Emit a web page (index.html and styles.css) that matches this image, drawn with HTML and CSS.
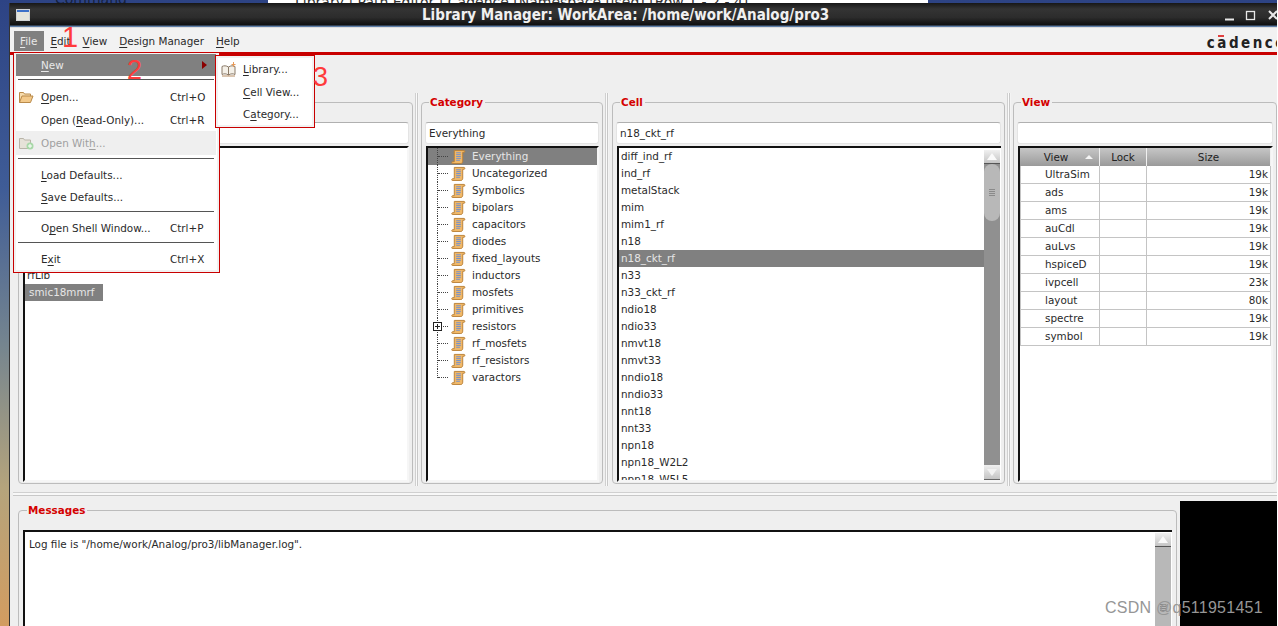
FILE: index.html
```html
<!DOCTYPE html>
<html lang="en">
<head>
<meta charset="utf-8">
<title>Library Manager</title>
<link rel="stylesheet" href="styles.css">
</head>
<body>
<svg class="defs" width="0" height="0" aria-hidden="true">
  <symbol id="scroll" viewBox="0 0 16 16">
    <path d="M3.500 1.500h10.500c1 0 1 2 0 2h-1.500v9.500c0 1.500-1 2.500-2 2.500H1.500c-1 0-1-2 .5-2h1.500z" fill="#f0b868" stroke="#b97f35"/>
    <path d="M5.500 4h5M5.500 6h5M5.500 8h5M5.500 10h5M5.500 12h4" stroke="#6f8fd0" stroke-width="1"/>
  </symbol>
</svg>
<div class="desktop">
  <div class="bg-text">Command</div>
  <div class="bg-window">Library | Path Editor | Cadence [Namespace used] [Row 1 - 2 - 4]</div>

  <div class="window">
    <header class="titlebar">
      <span class="win-icon"></span>
      <span class="title">Library Manager: WorkArea: /home/work/Analog/pro3</span>
      <span class="win-buttons">
        <svg width="52" height="14" viewBox="0 0 52 14">
          <path d="M0 11.500h9" stroke="#e8e8e8" stroke-width="2"/>
          <rect x="21.500" y="3.500" width="8" height="8" fill="none" stroke="#e8e8e8" stroke-width="1.300"/>
          <path d="M44 3l8 8M52 3l-8 8" stroke="#e8e8e8" stroke-width="2"/>
        </svg>
      </span>
    </header>

    <nav class="menubar">
      <span class="menu-top active"><u>F</u>ile</span>
      <span class="menu-top"><u>E</u>dit</span>
      <span class="menu-top"><u>V</u>iew</span>
      <span class="menu-top"><u>D</u>esign Manager</span>
      <span class="menu-top"><u>H</u>elp</span>
      <span class="logo">c<span class="logo-a">a</span>dence</span>
    </nav>
    <div class="redline"></div>
    <div class="toolbar"></div>

    <div class="panes">
      <fieldset class="group">
        <legend>Library</legend>
        <div class="field"></div>
        <div class="list list-lib">
          <div class="rows rows-lib">
            <div class="row">rfLib</div>
            <div class="row row-fit selected">smic18mmrf</div>
          </div>
        </div>
      </fieldset>
      <div class="vsplit"></div>

      <fieldset class="group">
        <legend>Category</legend>
        <div class="field">Everything</div>
        <div class="list">
          <div class="rows tree">
            <div class="node selected"><i class="branch"></i><svg class="scroll"><use href="#scroll"/></svg>Everything</div>
            <div class="node"><i class="branch"></i><svg class="scroll"><use href="#scroll"/></svg>Uncategorized</div>
            <div class="node"><i class="branch"></i><svg class="scroll"><use href="#scroll"/></svg>Symbolics</div>
            <div class="node"><i class="branch"></i><svg class="scroll"><use href="#scroll"/></svg>bipolars</div>
            <div class="node"><i class="branch"></i><svg class="scroll"><use href="#scroll"/></svg>capacitors</div>
            <div class="node"><i class="branch"></i><svg class="scroll"><use href="#scroll"/></svg>diodes</div>
            <div class="node"><i class="branch"></i><svg class="scroll"><use href="#scroll"/></svg>fixed_layouts</div>
            <div class="node"><i class="branch"></i><svg class="scroll"><use href="#scroll"/></svg>inductors</div>
            <div class="node"><i class="branch"></i><svg class="scroll"><use href="#scroll"/></svg>mosfets</div>
            <div class="node"><i class="branch"></i><svg class="scroll"><use href="#scroll"/></svg>primitives</div>
            <div class="node"><i class="branch"><b class="plus"></b></i><svg class="scroll"><use href="#scroll"/></svg>resistors</div>
            <div class="node"><i class="branch"></i><svg class="scroll"><use href="#scroll"/></svg>rf_mosfets</div>
            <div class="node"><i class="branch"></i><svg class="scroll"><use href="#scroll"/></svg>rf_resistors</div>
            <div class="node"><i class="branch last"></i><svg class="scroll"><use href="#scroll"/></svg>varactors</div>
          </div>
        </div>
      </fieldset>
      <div class="vsplit"></div>

      <fieldset class="group">
        <legend>Cell</legend>
        <div class="field">n18_ckt_rf</div>
        <div class="list list-scroll">
          <div class="rows">
            <div class="row">diff_ind_rf</div>
            <div class="row">ind_rf</div>
            <div class="row">metalStack</div>
            <div class="row">mim</div>
            <div class="row">mim1_rf</div>
            <div class="row">n18</div>
            <div class="row selected">n18_ckt_rf</div>
            <div class="row">n33</div>
            <div class="row">n33_ckt_rf</div>
            <div class="row">ndio18</div>
            <div class="row">ndio33</div>
            <div class="row">nmvt18</div>
            <div class="row">nmvt33</div>
            <div class="row">nndio18</div>
            <div class="row">nndio33</div>
            <div class="row">nnt18</div>
            <div class="row">nnt33</div>
            <div class="row">npn18</div>
            <div class="row">npn18_W2L2</div>
            <div class="row">npn18_W5L5</div>
          </div>
          <div class="scrollbar">
            <div class="sb-btn"><span class="tri-up"></span></div>
            <div class="sb-thumb"><span class="grip"></span></div>
            <div class="sb-trough"></div>
            <div class="sb-btn sb-btn-down"><span class="tri-down"></span></div>
          </div>
        </div>
      </fieldset>
      <div class="vsplit"></div>

      <fieldset class="group group-view">
        <legend>View</legend>
        <div class="field"></div>
        <div class="list">
          <table class="views">
            <thead>
              <tr><th class="col-view">View<span class="sort"></span></th><th class="col-lock">Lock</th><th>Size</th></tr>
            </thead>
            <tbody>
              <tr><td class="name">UltraSim</td><td></td><td class="size">19k</td></tr>
              <tr><td class="name">ads</td><td></td><td class="size">19k</td></tr>
              <tr><td class="name">ams</td><td></td><td class="size">19k</td></tr>
              <tr><td class="name">auCdl</td><td></td><td class="size">19k</td></tr>
              <tr><td class="name">auLvs</td><td></td><td class="size">19k</td></tr>
              <tr><td class="name">hspiceD</td><td></td><td class="size">19k</td></tr>
              <tr><td class="name">ivpcell</td><td></td><td class="size">23k</td></tr>
              <tr><td class="name">layout</td><td></td><td class="size">80k</td></tr>
              <tr><td class="name">spectre</td><td></td><td class="size">19k</td></tr>
              <tr><td class="name">symbol</td><td></td><td class="size">19k</td></tr>
            </tbody>
          </table>
        </div>
      </fieldset>
    </div>

    <div class="hsplit"><span class="hsplit-bar"></span></div>

    <div class="bottom">
      <fieldset class="group group-msg">
        <legend>Messages</legend>
        <div class="list list-scroll list-msg">
          <div class="log">Log file is "/home/work/Analog/pro3/libManager.log".</div>
          <div class="scrollbar scrollbar-msg">
            <div class="sb-btn"><span class="tri-up"></span></div>
            <div class="sb-thumb sb-thumb-msg"><span class="grip"></span></div>
          </div>
        </div>
      </fieldset>
      <div class="blackbox"></div>
    </div>
  </div>

  <div class="menu menu-file">
    <div class="item item-hot"><span class="ico"></span><span class="label"><u>N</u>ew</span><span class="arrow"></span></div>
    <hr class="sep sep-a">
    <div class="item">
      <span class="ico"><svg width="16" height="14" viewBox="0 0 16 14"><path d="M1.500 12.500V2.500h4l1 1.500h6v2" fill="#f7dcae" stroke="#b98a4a"/><path d="M1.500 12.500l2.500-6.500h11l-2.500 6.500z" fill="#f3c98a" stroke="#b98a4a"/></svg></span>
      <span class="label"><u>O</u>pen...</span><span class="key">Ctrl+O</span>
    </div>
    <div class="item item-low"><span class="ico"></span><span class="label">Open (<u>R</u>ead-Only)...</span><span class="key">Ctrl+R</span></div>
    <div class="item item-off">
      <span class="ico"><svg width="16" height="14" viewBox="0 0 16 14"><path d="M1.500 12.500V2.500h4l1 1.500h6v8.500z" fill="#e6e2d8" stroke="#b8b4a8"/><circle cx="12" cy="10" r="3.500" fill="#a8d8a8"/><path d="M10 10h4M12 8v4" stroke="#fff"/></svg></span>
      <span class="label">Open Wit<u>h</u>...</span>
    </div>
    <hr class="sep">
    <div class="item"><span class="ico"></span><span class="label"><u>L</u>oad Defaults...</span></div>
    <div class="item"><span class="ico"></span><span class="label"><u>S</u>ave Defaults...</span></div>
    <hr class="sep">
    <div class="item"><span class="ico"></span><span class="label">O<u>p</u>en Shell Window...</span><span class="key">Ctrl+P</span></div>
    <hr class="sep">
    <div class="item"><span class="ico"></span><span class="label">E<u>x</u>it</span><span class="key">Ctrl+X</span></div>
  </div>

  <div class="menu menu-new">
    <div class="item">
      <span class="ico ico-sub"><svg width="16" height="15" viewBox="0 0 16 15"><path d="M1 4.500c2-1 4-1 6.500.5v8c-2.500-1.500-4.500-1.500-6.500-.5z" fill="#f4f0e8" stroke="#8a7a68"/><path d="M14 4.500c-2-1-4-1-6.500.5v8c2.500-1.500 4.500-1.500 6.500-.5z" fill="#f4f0e8" stroke="#8a7a68"/><path d="M1 13.500h13v1H1z" fill="#b58a60"/><path d="M12.500 0v5M10.500 2.500h4" stroke="#e89a58"/></svg></span>
      <span class="label"><u>L</u>ibrary...</span>
    </div>
    <div class="item"><span class="ico ico-sub"></span><span class="label"><u>C</u>ell View...</span></div>
    <div class="item"><span class="ico ico-sub"></span><span class="label">C<u>a</u>tegory...</span></div>
  </div>

  <span class="note note-1">1</span>
  <span class="note note-2">2</span>
  <span class="note note-3">3</span>
  <span class="watermark">CSDN @q511951451</span>
</div>
</body>
</html>
```
FILE: styles.css
```css
* { box-sizing: border-box; }
html, body { margin: 0; padding: 0; background: #fff; overflow: hidden; }
body { font: 10.4px/17px "DejaVu Sans", sans-serif; color: #2a2a2a; }
.defs { position: absolute; }

.desktop {
  position: relative;
  width: 1277px;
  height: 626px;
  overflow: hidden;
  background: linear-gradient(180deg, #2d4384 0%, #3f5c97 30%, #75858f 55%, #b5a47c 78%, #d29c60 100%);
}
.bg-text {
  position: absolute; left: 55px; top: -8px;
  font-size: 14px; color: #14203c; line-height: 14px;
}
.bg-window {
  position: absolute; left: 268px; top: 0; width: 660px; height: 3px;
  background: #fff; overflow: hidden;
  padding-left: 27px; font-size: 14px; line-height: 4px; color: #333;
  white-space: nowrap;
}

/* window */
.window {
  position: absolute; left: 9px; top: 3px;
  width: 1268px; height: 623px;
  background: #efefef;
  border-left: 1px solid #333;
  overflow: hidden;
  display: flex; flex-direction: column;
}
.titlebar {
  height: 24px; flex: none;
  display: flex; align-items: center;
  padding-left: 6px;
  background: linear-gradient(180deg, #171717 0%, #343434 25%, #2c2c2c 60%, #0f0f0f 92%, #5f7fa8 96%);
  color: #f0f0f0;
}
.win-icon {
  width: 14px; height: 12px; flex: none;
  background: linear-gradient(180deg, #3c70c8 0 2px, #e4e4dc 2px);
  border: 1px solid #cfd2d4;
}
.title {
  margin-left: 392px;
  font-weight: bold; font-size: 15px; font-stretch: condensed;
  font-family: "DejaVu Sans Condensed", "DejaVu Sans", sans-serif;
  white-space: nowrap;
}
.win-buttons { margin-left: auto; display: flex; }

.menubar {
  height: 25px; flex: none;
  display: flex; align-items: flex-end;
  padding: 0 0 1px 4px;
  background: #f2f2f2;
  border-top: 1px solid #ddd;
  position: relative;
}
.menu-top { height: 20px; line-height: 20px; padding: 0 6px; }
.menu-top.active { background: #808080; color: #e8e8e8; padding-right: 7px; }
u { text-underline-offset: 2px; text-decoration-thickness: 1px; }
.logo {
  position: relative;
  margin: 0 -10px -2px auto;
  font: bold 15px/20px "DejaVu Sans Condensed", "DejaVu Sans", sans-serif;
  font-stretch: condensed;
  letter-spacing: 2.500px;
  color: #222;
  white-space: nowrap;
}
.logo-a { position: relative; }
.logo-a::before {
  content: ""; position: absolute; left: 1px; top: 1px;
  width: 6px; height: 2px; background: #e04040;
}
.redline { height: 3px; flex: none; background: #c80000; }
.toolbar { height: 38px; flex: none; }

/* panes */
.panes {
  height: 394px; flex: none;
  display: grid;
  grid-template-columns: 395px 8px 182px 9px 393px 8px 264px;
  grid-template-rows: minmax(0, 1fr);
  padding-left: 8px;
}
.group {
  margin: 2px 0 3px;
  padding: 13px 3px 1px;
  min-width: 0; min-height: 0;
  border: 1px solid #bcbcbc;
  border-radius: 4px;
  display: flex; flex-direction: column;
}
legend {
  padding: 0 2px 0 1px; margin-left: 4px;
  color: #d40000; font-weight: bold; font-size: 10.4px; line-height: 14px;
}
.field {
  height: 22px; flex: none;
  line-height: 21px; padding-left: 3px;
  background: #fff;
  border: 1px solid #e4e4e4; border-top-color: #b0b0b0;
  border-radius: 3px;
  margin-bottom: 2px;
}
.list {
  flex: 1; min-height: 0;
  margin-left: 1px;
  background: #fff;
  border-top: 2px solid #111; border-left: 2px solid #111;
  border-right: 2px solid #f6f6f6; border-bottom: 2px solid #f6f6f6;
  overflow: hidden;
}
.rows { color: #2a2a2a; }
.rows-lib { padding-top: 119px; }
.row { height: 17px; line-height: 17px; padding-left: 2px; white-space: nowrap; }
.row-fit { width: 78px; padding-left: 4px; }
.selected { background: #808080; color: #e6e6e6; }

.list-scroll { display: flex; border-right: 0; }
.list-scroll .rows { flex: 1; min-width: 0; }
.scrollbar {
  width: 16px; flex: none; margin: 2px 1px 0 0;
  display: flex; flex-direction: column;
  background: #909090;
}
.sb-btn {
  height: 14px; flex: none;
  background: linear-gradient(180deg, #f0f0f0, #c4c4c4);
  border-bottom: 1px solid #555;
  display: flex; align-items: center; justify-content: center;
}
.sb-btn-down { height: 15px; border-bottom: 1px solid #666; }
.tri-up { border: 5px solid transparent; border-top: 0; border-bottom: 7px solid #fafafa; }
.tri-down { border: 5px solid transparent; border-bottom: 0; border-top: 7px solid #f2f2f2; }
.sb-thumb {
  height: 57px; flex: none;
  background: #b8b8b8;
  border-radius: 8px;
  display: flex; align-items: center; justify-content: center;
}
.grip {
  width: 6px; height: 8px;
  background: repeating-linear-gradient(180deg, #8a8a8a 0 1px, transparent 1px 2px);
}
.sb-trough { flex: 1; }
.scrollbar-msg { background: #b8b8b8; margin-top: 1px; }
.sb-thumb-msg { flex: 1; height: auto; margin-top: 1px; border-radius: 8px 8px 0 0; align-items: flex-start; padding-top: 56px; }

/* tree */
.node {
  height: 17px; line-height: 17px;
  display: flex; align-items: flex-start;
  padding-left: 9px; white-space: nowrap;
}
.branch {
  width: 11px; height: 17px; flex: none;
  border-left: 1px dotted #444;
  position: relative; margin-right: 3px;
}
.branch::after {
  content: ""; position: absolute; left: 0; top: 8px; width: 10px;
  border-top: 1px dotted #444;
}
.branch.last { height: 9px; }
.plus {
  position: absolute; left: -5px; top: 4px; z-index: 1;
  width: 9px; height: 9px;
  border: 1px solid #222;
  background: linear-gradient(#222, #222) center / 5px 1px no-repeat,
              linear-gradient(#222, #222) center / 1px 5px no-repeat,
              #fff;
}
.scroll { width: 15px; height: 15px; flex: none; margin: 1px 6px 0 0; }

/* view table */
.views { border-collapse: separate; border-spacing: 0; table-layout: fixed; width: 251px; }
.views th {
  height: 18px; padding: 0;
  font-weight: normal; text-align: center;
  background: linear-gradient(180deg, #c6c6c6, #9a9a9a);
  border-right: 1px solid #f0f0f0;
  color: #222;
}
.views .col-view { width: 80px; padding-right: 7px; position: relative; }
.col-lock { width: 47px; }
.sort {
  position: absolute; right: 6px; top: 7px;
  border: 4px solid transparent; border-top: 0; border-bottom: 4px solid #f4f4f4;
}
.views td {
  height: 18px; padding: 0;
  border-right: 1px solid #c4c4c4; border-bottom: 1px solid #c4c4c4;
}
.views td:first-child { border-left: 1px solid #c4c4c4; }
.views .name { padding-left: 24px; }
.views .size { text-align: right; padding-right: 2px; }

.vsplit {
  margin: 0 2px 1px;
  background: linear-gradient(90deg, #d0d0d0 0 1px, #fafafa 1px 2px, #c8c8c8 2px 3px, #f4f4f4 3px);
  width: 4px;
}
.hsplit { height: 14px; flex: none; padding: 5px 0 0 3px; }
.hsplit-bar {
  display: block; height: 5px;
  background: linear-gradient(180deg, #d0d0d0 0 1px, #f8f8f8 1px 3px, #c8c8c8 3px 4px, #f0f0f0 4px);
}

/* bottom */
.bottom {
  flex: 1; min-height: 0;
  display: grid;
  grid-template-columns: 1159px 3px 97px;
  grid-template-rows: minmax(0, 1fr);
  padding-left: 8px;
}
.group-msg { margin: 2px 0 -20px; padding: 13px 4px 0; }
.list-msg { margin-left: 0; border-bottom: 0; }
.log { flex: 1; padding: 4px 0 0 4px; }
.blackbox { grid-column: 3; grid-row: 1; background: #000; }

/* menus */
.menu {
  position: absolute;
  background: #fff;
  border: 1px solid #c80000;
  z-index: 5;
}
.menu-file { left: 13px; top: 52px; width: 207px; height: 221px; padding: 1px 3px 0 2px; box-shadow: inset 0 0 0 2px #f2f2f2; }
.menu-new { left: 215px; top: 55px; width: 100px; height: 73px; padding: 2px 3px 0 2px; box-shadow: inset 0 0 0 2px #f2f2f2; z-index: 6; }
.item {
  height: 22px; display: flex; align-items: center;
  line-height: 22px; white-space: nowrap;
}
.menu-new .item { height: 22.500px; }
.item-hot { background: #808080; color: #e8e8e8; }
.item-low { height: 23px; padding-top: 1px; }
.item-off { background: #efefef; color: #a0a0a0; height: 24px; }
.ico { width: 25px; flex: none; display: flex; align-items: center; padding-left: 2px; }
.ico-sub { padding-left: 3px; }
.label { flex: 1; }
.key { width: 46px; flex: none; }
.arrow {
  width: 0; height: 0; margin-right: 9px;
  border: 4px solid transparent; border-right: 0; border-left: 5px solid #8a0000;
}
.sep {
  height: 1px; margin: 3px 2px 5px; border: 0; background: #555;
}
.sep-a { margin-bottom: 6px; }

/* annotations */
.note {
  position: absolute; z-index: 8;
  font-family: "Liberation Sans", sans-serif; font-size: 27px; line-height: 27px;
  color: #ff3b3b;
}
.note-1 { left: 62px; top: 23px; font-size: 29px; line-height: 29px; }
.note-2 { left: 127px; top: 57px; }
.note-3 { left: 313px; top: 64px; }
.watermark {
  position: absolute; left: 1105px; top: 599px; z-index: 9;
  font: 16px/18px "Liberation Sans", sans-serif;
  letter-spacing: .25px;
  color: #969696;
  white-space: nowrap;
}
```
